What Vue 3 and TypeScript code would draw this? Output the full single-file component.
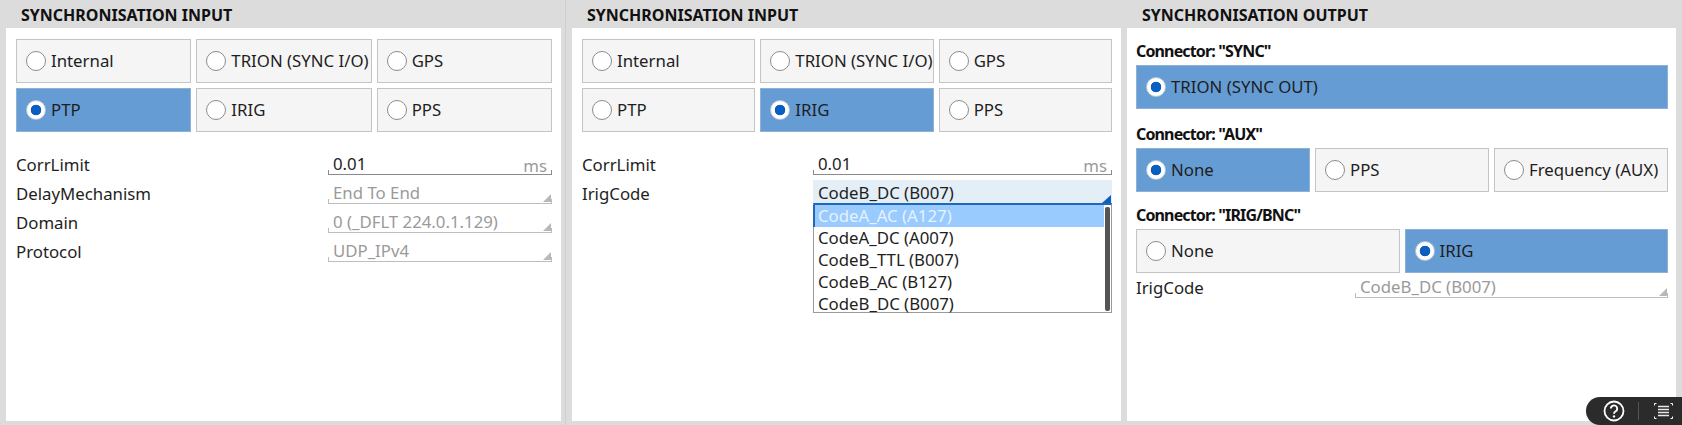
<script setup lang="ts">
interface Opt { label: string; on?: boolean }
const rows1: Opt[] = [{ label: 'Internal' }, { label: 'TRION (SYNC I/O)' }, { label: 'GPS' }, { label: 'PTP', on: true }, { label: 'IRIG' }, { label: 'PPS' }]
const rows2: Opt[] = [{ label: 'Internal' }, { label: 'TRION (SYNC I/O)' }, { label: 'GPS' }, { label: 'PTP' }, { label: 'IRIG', on: true }, { label: 'PPS' }]
const ptpFields = [
  { name: 'DelayMechanism', value: 'End To End' },
  { name: 'Domain', value: '0 (_DFLT 224.0.1.129)' },
  { name: 'Protocol', value: 'UDP_IPv4' }
]
const codes = ['CodeA_DC (A007)', 'CodeB_TTL (B007)', 'CodeB_AC (B127)', 'CodeB_DC (B007)']
</script>

<template>
  <div class="page">
    <section class="panel p1">
      <h2>SYNCHRONISATION INPUT</h2>
      <div class="body">
        <div class="grid g3">
          <div v-for="o in rows1" :key="o.label" class="btn" :class="{ on: o.on }"><span class="radio"></span>{{ o.label }}</div>
        </div>
        <div class="fields">
          <div class="row">
            <span class="name">CorrLimit</span>
            <div class="field active"><span>0.01</span><span class="unit">ms</span></div>
          </div>
          <div v-for="f in ptpFields" :key="f.name" class="row">
            <span class="name">{{ f.name }}</span>
            <div class="field"><span>{{ f.value }}</span><i class="tri"></i></div>
          </div>
        </div>
      </div>
    </section>

    <div class="divider"></div>

    <section class="panel p2">
      <h2>SYNCHRONISATION INPUT</h2>
      <div class="body">
        <div class="grid g3">
          <div v-for="o in rows2" :key="o.label" class="btn" :class="{ on: o.on }"><span class="radio"></span>{{ o.label }}</div>
        </div>
        <div class="fields">
          <div class="row">
            <span class="name">CorrLimit</span>
            <div class="field active"><span>0.01</span><span class="unit">ms</span></div>
          </div>
          <div class="row">
            <span class="name">IrigCode</span>
            <div class="field open">
              <span>CodeB_DC (B007)</span><i class="tri blue"></i>
              <div class="menu">
                <div class="item sel">CodeA_AC (A127)</div>
                <div v-for="c in codes" :key="c" class="item">{{ c }}</div>
                <i class="thumb"></i>
              </div>
            </div>
          </div>
        </div>
      </div>
    </section>

    <section class="panel p3">
      <h2>SYNCHRONISATION OUTPUT</h2>
      <div class="body">
        <h3>Connector: "SYNC"</h3>
        <div class="btn on"><span class="radio"></span>TRION (SYNC OUT)</div>
        <h3>Connector: "AUX"</h3>
        <div class="grid g3 single">
          <div class="btn on"><span class="radio"></span>None</div>
          <div class="btn"><span class="radio"></span>PPS</div>
          <div class="btn"><span class="radio"></span>Frequency (AUX)</div>
        </div>
        <h3>Connector: "IRIG/BNC"</h3>
        <div class="grid g2">
          <div class="btn"><span class="radio"></span>None</div>
          <div class="btn on"><span class="radio"></span>IRIG</div>
        </div>
        <div class="row out">
          <span class="name">IrigCode</span>
          <div class="field"><span>CodeB_DC (B007)</span><i class="tri"></i></div>
        </div>
      </div>
    </section>

    <div class="widget">
      <svg class="help" width="24" height="24" viewBox="0 0 24 24" fill="none" stroke="#fff">
        <circle cx="12" cy="12" r="9.5" stroke-width="1.8" />
        <path d="M8.8 9.6a3.2 3.2 0 1 1 4.9 2.7c-1.1.7-1.7 1.2-1.7 2.5" stroke-width="1.9" />
        <circle cx="12" cy="17.4" r="1.2" fill="#fff" stroke="none" />
      </svg>
      <span class="sep"></span>
      <svg width="19" height="16" viewBox="0 0 19 16" fill="none">
        <path d="M4 3.5H15M4 6.5H15M4 9.5H15M4 12.5H15" stroke="#e8e8e8" stroke-width="1.3" />
        <path d="M.5 .5h2M.5 .5v3M18.5 .5h-2M18.5 .5v3M.5 15.5h2M.5 15.5v-3M18.5 15.5h-2M18.5 15.5v-3" stroke="#fff" stroke-width="1" stroke-dasharray="2 1" />
      </svg>
    </div>
  </div>
</template>

<style>
html, body { margin: 0; background: #dcdcdc; }
</style>

<style scoped>
.page {
  position: relative;
  width: 1682px;
  height: 425px;
  overflow: hidden;
  display: flex;
  background: #dcdcdc;
  font-family: "Noto Sans", sans-serif;
  font-size: 16.8px;
  color: #1e1e1e;
}
.panel { display: flex; flex-direction: column; height: 421px; }
.p1 { width: 555px; margin-left: 6px; }
.divider { width: 1px; height: 425px; margin-left: 4px; margin-right: -5px; background: #cfcfcf; }
.p2 { width: 549px; margin-left: 11px; }
.p3 { width: 549px; margin-left: 6px; }
h2 {
  margin: 0;
  height: 28px;
  line-height: 31px;
  padding-left: 15px;
  font-size: 16px;
  font-weight: 700;
  color: #111;
}
.body { flex: 1; background: #fff; padding: 11px 9px 0 10px; }
.grid { display: grid; gap: 5px; }
.g3 { grid-template-columns: 1fr 1fr 1fr; grid-auto-rows: 44px; }
.g2 { grid-template-columns: 1fr 1fr; grid-auto-rows: 44px; }
.btn {
  box-sizing: border-box;
  height: 44px;
  display: flex;
  align-items: center;
  gap: 5px;
  padding: 0 0 1px 9px;
  background: #f5f5f5;
  border: 1px solid #c4c4c4;
  white-space: nowrap;
  overflow: hidden;
}
.btn.on { background: #659cd3; border-color: #8fb1d3; }
.radio {
  flex: none;
  box-sizing: border-box;
  width: 20px;
  height: 20px;
  border-radius: 50%;
  background: #fff;
  border: 1px solid #8c8c8c;
}
.on .radio {
  border: 1px solid #b8c8d8;
  background: radial-gradient(circle, #0b5fbe 0 5px, #fff 5.6px);
}
.fields { margin-top: 17px; }
.row {
  display: flex;
  justify-content: space-between;
  align-items: flex-end;
  height: 29px;
}
.name { line-height: 26px; }
.field {
  position: relative;
  box-sizing: border-box;
  width: 224px;
  height: 23px;
  margin-bottom: 3px;
  padding: 0 5px;
  display: flex;
  justify-content: space-between;
  line-height: 24px;
  color: #9a9a9a;
  border-bottom: 1px solid #bdbdbd;
}
.field::before, .field::after {
  content: "";
  position: absolute;
  bottom: 0;
  width: 1px;
  height: 4px;
  background: #bdbdbd;
}
.field::before { left: 0; }
.field::after { right: 0; }
.field.active { color: #1e1e1e; border-bottom-color: #8a8a8a; }
.field.active::before, .field.active::after { background: #8a8a8a; }
.unit { color: #9a9a9a; line-height: 28px; }
.tri {
  position: absolute;
  right: 1px;
  bottom: 1px;
  width: 0;
  height: 0;
  border-style: solid;
  border-width: 0 0 8px 8px;
  border-color: transparent transparent #b8b8b8 transparent;
}
.p2 .field { width: 299px; }
.p3 .field { width: 313px; }
.field.open { height: 24px; background: #e4eef7; color: #1e1e1e; border-bottom: none; line-height: 25px; }
.field.open::before, .field.open::after { display: none; }
.tri.blue { border-bottom-color: #0b5fbe; border-left-width: 9px; bottom: 1px; }
.menu {
  position: absolute;
  left: 0;
  right: 0;
  top: 23px;
  z-index: 2;
  height: 110px;
  background: #fff;
  border-top: 2px solid #1f69b8;
  border-bottom: 1px solid #9a9a9a;
  border-left: 1px solid #9a9a9a;
  border-right: 1px solid #9a9a9a;
  box-sizing: border-box;
}
.item { height: 22px; line-height: 22px; padding-left: 4px; color: #1e1e1e; }
.item:nth-last-child(2) { height: 19px; }
.item.sel { background: #99cbff; color: #e6f2ff; border-left: 2px solid #1f69b8; padding-left: 3px; margin: 0 7px 0 -1px; }
.thumb {
  position: absolute;
  right: 1px;
  top: 2px;
  bottom: 1px;
  width: 5px;
  border-radius: 2px;
  background: #555;
}
h3 {
  margin: 0;
  height: 29px;
  line-height: 30px;
  font-size: 16px;
  font-weight: 700;
  color: #111;
  letter-spacing: -0.85px;
}
.p3 .body { padding: 8px 8px 0 9px; }
.body > .btn { margin-bottom: 10px; }
.single { margin-bottom: 8px; }
.row.out { height: 28px; }
.widget {
  position: absolute;
  right: 0;
  bottom: 0;
  width: 96px;
  height: 28px;
  box-sizing: border-box;
  padding-left: 16px;
  background: #2b2b2b;
  border-radius: 14px 0 0 14px;
  display: flex;
  align-items: center;
  gap: 15px;
}
.help { margin-right: -3px; }
.sep { width: 1px; height: 18px; background: #555; }
</style>
